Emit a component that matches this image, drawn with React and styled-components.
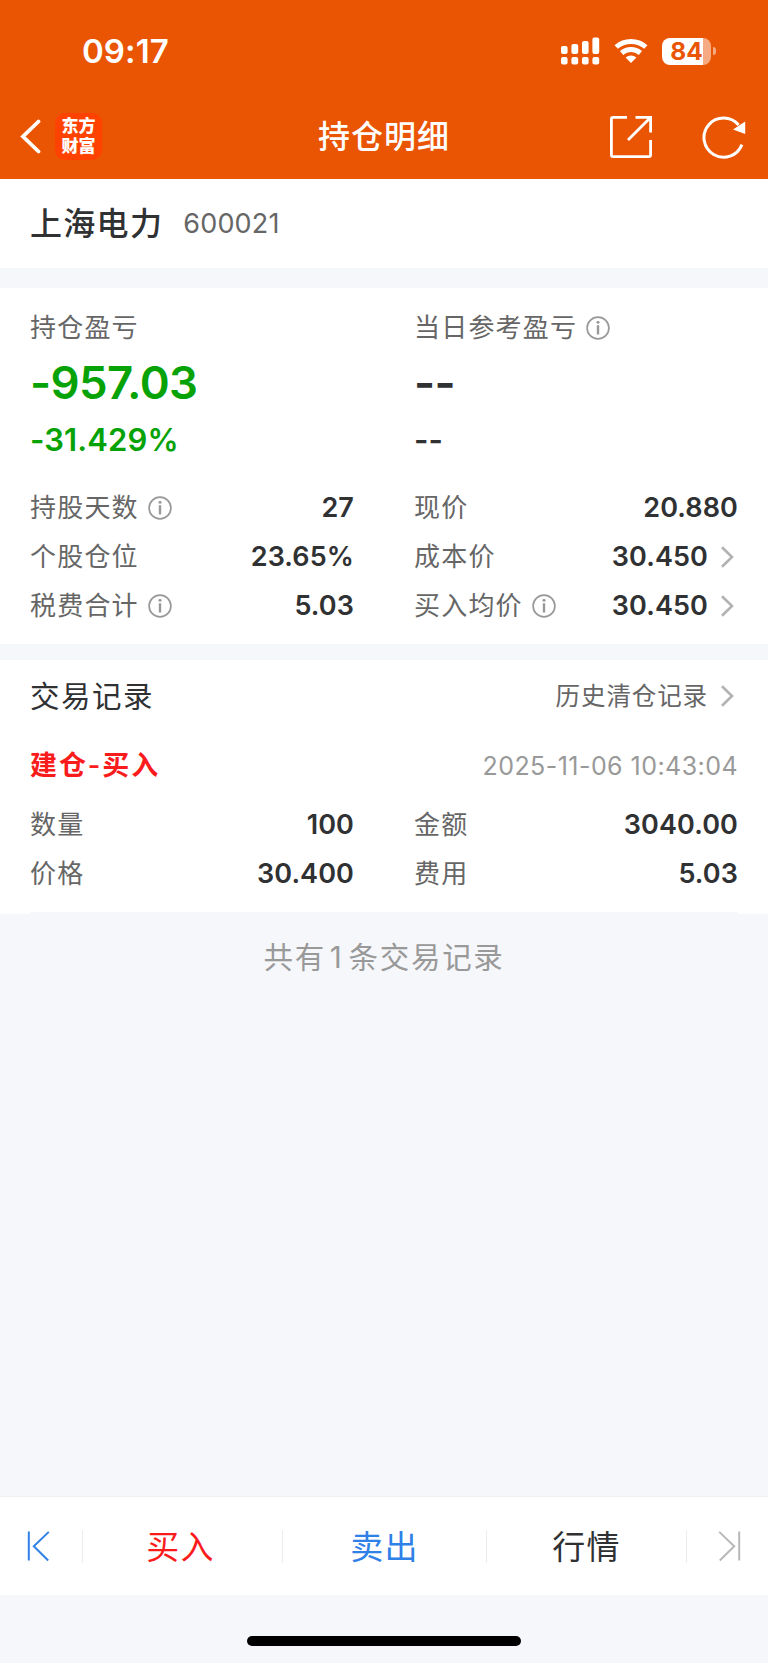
import React from "react";
import styled, { createGlobalStyle, css } from "styled-components";

const GlobalStyle = createGlobalStyle`
  * {
    box-sizing: border-box;
  }

  body {
    margin: 0;
    background-color: #f6f7fa;
    color: #303133;
    font-family: Inter, "Noto Sans CJK SC", sans-serif;
  }

  svg {
    display: block;
    flex: none;
  }
`;

const Page = styled.div`
  display: flex;
  flex-direction: column;
  width: 768px;
  height: 1663px;
  overflow: hidden;
  background-color: #f6f7fa;
`;

const Header = styled.header`
  height: 179px;
  background-color: #ea5504;
  color: #fff;
`;

const StatusBar = styled.div`
  display: flex;
  align-items: center;
  justify-content: space-between;
  height: 102px;
  padding: 0 52px 0 82px;
`;

const Time = styled.div`
  font-size: 33px;
  font-weight: 600;
  line-height: 40px;
  letter-spacing: 0.1px;
`;

const StatusIcons = styled.div`
  display: flex;
  align-items: center;
`;

const Battery = styled.div`
  display: flex;
  align-items: center;
  justify-content: center;
  width: 49px;
  height: 27px;
  margin-left: 14px;
  border-radius: 8px;
  background: linear-gradient(to right, #fff 84%, #f5aa82 84%);
  color: #ea5504;
  font-size: 24.5px;
  font-weight: 700;
  line-height: 27px;
`;

const BatteryTip = styled.div`
  width: 3px;
  height: 8px;
  margin-left: 2px;
  border-radius: 0 4px 4px 0;
  background-color: #f5aa82;
`;

const TitleBar = styled.div`
  display: grid;
  grid-template-columns: 1fr auto 1fr;
  align-items: center;
  height: 69px;
  padding: 0 22px 0 20px;
`;

const TitleSide = styled.div`
  display: flex;
  align-items: center;
  justify-content: ${({ $end }) => ($end ? "flex-end" : "flex-start")};
  gap: ${({ $end }) => ($end ? "50px" : "14px")};
`;

const Title = styled.h1`
  margin: 0;
  padding: 1px 0 0 2px;
  font-size: 32px;
  font-weight: 500;
  line-height: 40px;
  letter-spacing: 1px;
`;

const Logo = styled.div`
  display: flex;
  flex-direction: column;
  align-items: center;
  justify-content: center;
  width: 47px;
  height: 47px;
  border-radius: 10px;
  background-color: #ff4200;
`;

const LogoText = styled.div`
  font-family: "Liberation Sans", "Noto Sans CJK SC", sans-serif;
  font-size: 17px;
  font-weight: 900;
  line-height: 20px;
`;

const Stock = styled.section`
  display: flex;
  align-items: center;
  height: 89px;
  padding: 0 30px;
  background-color: #fff;
`;

const StockName = styled.div`
  font-size: 32px;
  font-weight: 500;
  line-height: 40px;
  letter-spacing: 1.3px;
`;

const StockCode = styled.div`
  margin-left: 20px;
  color: #666;
  font-size: 27px;
  line-height: 40px;
  letter-spacing: 0.2px;
`;

const Panel = styled.section`
  height: 356px;
  margin-top: 20px;
  padding: 22px 30px 0;
  background-color: #fff;
`;

const Columns = styled.div`
  display: grid;
  grid-template-columns: 324px 324px;
  column-gap: 60px;
`;

const Summary = styled.div`
  display: flex;
  flex-direction: column;
  height: 173px;
`;

const Profit = styled.div`
  margin-top: 13px;
  font-size: 45.5px;
  font-weight: 600;
  line-height: 48px;
  letter-spacing: -0.6px;
  color: ${({ $down }) => ($down ? "#06a206" : "#303133")};
`;

const Percent = styled.div`
  margin-top: 15px;
  font-size: 31px;
  font-weight: 600;
  line-height: 36px;
  letter-spacing: 0.1px;
  color: ${({ $down }) => ($down ? "#06a206" : "#303133")};
`;

const Row = styled.div`
  display: flex;
  align-items: center;
  height: 49px;
`;

const Label = styled.div`
  display: flex;
  align-items: center;
  gap: 9px;
  color: #666;
  font-size: 26px;
  font-weight: 400;
  line-height: 36px;
  letter-spacing: 1.2px;
`;

const Value = styled.div`
  margin-left: auto;
  font-size: 27px;
  font-weight: 600;
  line-height: 36px;
  letter-spacing: 0.1px;
`;

const Records = styled.section`
  height: 254px;
  margin-top: 16px;
  padding: 0 30px;
  background-color: #fff;
`;

const RecordsHeader = styled.div`
  display: flex;
  align-items: center;
  justify-content: space-between;
  height: 71px;
`;

const RecordsTitle = styled.h2`
  margin: 0;
  font-size: 29.5px;
  font-weight: 400;
  line-height: 40px;
  letter-spacing: 1.5px;
`;

const HistoryLink = styled.div`
  display: flex;
  align-items: center;
  color: #666;
  font-size: 24.5px;
  line-height: 36px;
  letter-spacing: 0.9px;
`;

const RecordHead = styled.div`
  display: flex;
  align-items: center;
  justify-content: space-between;
  height: 69px;
`;

const RecordType = styled.div`
  color: #fa1c1c;
  font-size: 27px;
  font-weight: 600;
  line-height: 36px;
  letter-spacing: 1.9px;
`;

const RecordTime = styled.div`
  color: #999;
  font-size: 25px;
  line-height: 36px;
  letter-spacing: 0.45px;
`;

const RecordLine = styled.div`
  height: 2px;
  margin-top: 14px;
  background-color: #f6f7fa;
`;

const Total = styled.div`
  margin-top: 23px;
  color: #999;
  font-size: 29.5px;
  line-height: 40px;
  letter-spacing: 1.7px;
  text-align: center;
`;

const Count = styled.span`
  margin: 0 5px 0 4px;
`;

const Toolbar = styled.nav`
  display: grid;
  grid-template-columns: 82px 1px 199px 1px 203px 1px 199px 1px 81px;
  align-items: center;
  height: 99px;
  margin-top: auto;
  border-top: 1px solid #eeeff1;
  background-color: #fff;
`;

const ToolbarEdge = styled.div`
  display: flex;
  align-items: center;
  justify-content: ${({ $end }) => ($end ? "flex-end" : "flex-start")};
  padding: 0 27px;
`;

const ToolbarItem = styled.div`
  font-size: 33px;
  line-height: 40px;
  letter-spacing: 1.2px;
  text-align: center;

  ${({ $color, $shift = 0 }) => css`
    padding: 1px ${$shift}px 0 0;
    color: ${$color};
  `};
`;

const Divider = styled.div`
  width: 1px;
  height: 33px;
  background-color: #ececec;
`;

const HomeArea = styled.div`
  display: flex;
  justify-content: center;
  height: 68px;
  padding-top: 41px;
`;

const HomeIndicator = styled.div`
  width: 274px;
  height: 10px;
  border-radius: 5px;
  background-color: #000;
`;

function SignalIcon() {
  return (
    <svg width="39" height="28" viewBox="0 0 39 28" fill="#fff">
      <rect x="0" y="9" width="6.6" height="8" rx="2" />
      <rect x="10.4" y="7" width="6.8" height="10" rx="2" />
      <rect x="21" y="4" width="6.6" height="13" rx="2" />
      <rect x="31.4" y="0.5" width="6.8" height="16.5" rx="2" />
      <rect x="0" y="20" width="6.6" height="7.5" rx="2" />
      <rect x="10.4" y="20" width="6.8" height="7.5" rx="2" />
      <rect x="21" y="20" width="6.6" height="7.5" rx="2" />
      <rect x="31.4" y="20" width="6.8" height="7.5" rx="2" />
    </svg>
  );
}

const WifiSvg = styled.svg`
  margin-left: 14px;
`;

function WifiIcon() {
  return (
    <WifiSvg
      width="34"
      height="26"
      viewBox="0 0 34 26"
      fill="none"
      stroke="#fff"
      strokeWidth="5"
    >
      <path d="M2.2 9C10.5 1.6 23.5 1.6 31.8 9" />
      <path d="M7.6 15C13 10.3 21 10.3 26.4 15" />
      <path
        d="M17 25L11.6 19.6C14.8 16.8 19.2 16.8 22.4 19.6Z"
        fill="#fff"
        stroke="none"
      />
    </WifiSvg>
  );
}

function BackIcon() {
  return (
    <svg width="21" height="36" viewBox="0 0 21 36" fill="none">
      <path
        d="M18.5 2.5L3 17.5L18.5 32.5"
        stroke="#fff"
        strokeWidth="3.8"
        strokeLinecap="round"
      />
    </svg>
  );
}

function ShareIcon() {
  return (
    <svg
      width="42"
      height="42"
      viewBox="0 0 42 42"
      fill="none"
      stroke="#fff"
      strokeWidth="2.8"
    >
      <path d="M17 1.4H3.2Q1.4 1.4 1.4 3.2V38.8Q1.4 40.6 3.2 40.6H38.8Q40.6 40.6 40.6 38.8V24" />
      <path d="M25.5 1.4H40.6V16.5M40 2L18 24" />
    </svg>
  );
}

function RefreshIcon() {
  return (
    <svg width="44" height="44" viewBox="0 0 44 44" fill="none">
      <path
        d="M39.9 29.6A19.6 19.6 0 1 1 36.6 10"
        stroke="#fff"
        strokeWidth="3"
      />
      <path d="M43.2 6.5V19L31 14.5Z" fill="#fff" />
    </svg>
  );
}

function InfoIcon() {
  return (
    <svg width="24" height="24" viewBox="0 0 24 24" fill="none">
      <circle cx="12" cy="12" r="10.9" stroke="#999" strokeWidth="1.7" />
      <circle cx="12" cy="6.2" r="1.5" fill="#999" />
      <path d="M12 9.2V18.5" stroke="#999" strokeWidth="2.4" />
    </svg>
  );
}

const ArrowSvg = styled.svg`
  margin: 0 3px 0 11px;
`;

function ArrowIcon() {
  return (
    <ArrowSvg width="16" height="22" viewBox="0 0 16 22" fill="none">
      <path d="M3 1.2L13 11L3 20.8" stroke="#b2b2b2" strokeWidth="2.6" />
    </ArrowSvg>
  );
}

function EdgeIcon({ color, flip }) {
  return (
    <svg
      width="23"
      height="31"
      viewBox="0 0 23 31"
      fill="none"
      stroke={color}
      strokeWidth="2"
    >
      {flip ? (
        <path d="M21.2 0.5V29.5M1.2 0.9L16.2 15.3L1.8 29.5" />
      ) : (
        <path d="M1.8 0.5V29.5M21.8 0.9L6.8 15.3L21.2 29.5" />
      )}
    </svg>
  );
}

function Field({ label, value, info, arrow }) {
  return (
    <Row>
      <Label>
        {label}
        {info && <InfoIcon />}
      </Label>
      <Value>{value}</Value>
      {arrow && <ArrowIcon />}
    </Row>
  );
}

export default function App() {
  return (
    <Page>
      <GlobalStyle />
      <Header>
        <StatusBar>
          <Time>09:17</Time>
          <StatusIcons>
            <SignalIcon />
            <WifiIcon />
            <Battery>84</Battery>
            <BatteryTip />
          </StatusIcons>
        </StatusBar>
        <TitleBar>
          <TitleSide>
            <BackIcon />
            <Logo>
              <LogoText>东方</LogoText>
              <LogoText>财富</LogoText>
            </Logo>
          </TitleSide>
          <Title>持仓明细</Title>
          <TitleSide $end>
            <ShareIcon />
            <RefreshIcon />
          </TitleSide>
        </TitleBar>
      </Header>

      <Stock>
        <StockName>上海电力</StockName>
        <StockCode>600021</StockCode>
      </Stock>

      <Panel>
        <Columns>
          <Summary>
            <Label>持仓盈亏</Label>
            <Profit $down>-957.03</Profit>
            <Percent $down>-31.429%</Percent>
          </Summary>
          <Summary>
            <Label>
              当日参考盈亏
              <InfoIcon />
            </Label>
            <Profit>--</Profit>
            <Percent>--</Percent>
          </Summary>
          <Field label="持股天数" value="27" info />
          <Field label="现价" value="20.880" />
          <Field label="个股仓位" value="23.65%" />
          <Field label="成本价" value="30.450" arrow />
          <Field label="税费合计" value="5.03" info />
          <Field label="买入均价" value="30.450" info arrow />
        </Columns>
      </Panel>

      <Records>
        <RecordsHeader>
          <RecordsTitle>交易记录</RecordsTitle>
          <HistoryLink>
            历史清仓记录
            <ArrowIcon />
          </HistoryLink>
        </RecordsHeader>
        <RecordHead>
          <RecordType>建仓-买入</RecordType>
          <RecordTime>2025-11-06 10:43:04</RecordTime>
        </RecordHead>
        <Columns>
          <Field label="数量" value="100" />
          <Field label="金额" value="3040.00" />
          <Field label="价格" value="30.400" />
          <Field label="费用" value="5.03" />
        </Columns>
        <RecordLine />
      </Records>

      <Total>
        共有<Count>1</Count>条交易记录
      </Total>

      <Toolbar>
        <ToolbarEdge>
          <EdgeIcon color="#2f80e7" />
        </ToolbarEdge>
        <Divider />
        <ToolbarItem $color="#fa1c1c" $shift={4}>
          买入
        </ToolbarItem>
        <Divider />
        <ToolbarItem $color="#2f80e7">卖出</ToolbarItem>
        <Divider />
        <ToolbarItem $color="#303133">行情</ToolbarItem>
        <Divider />
        <ToolbarEdge $end>
          <EdgeIcon color="#b8b8b8" flip />
        </ToolbarEdge>
      </Toolbar>
      <HomeArea>
        <HomeIndicator />
      </HomeArea>
    </Page>
  );
}
